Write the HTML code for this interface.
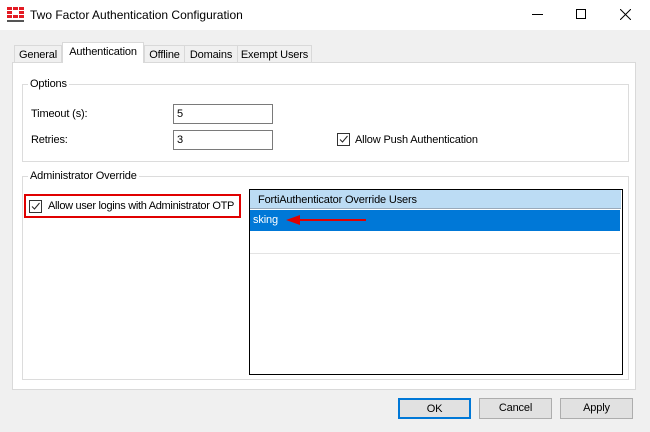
<!DOCTYPE html>
<html><head><style>
*{margin:0;padding:0;box-sizing:border-box}
body{width:650px;height:432px;background:#f0f0f0;font-family:"Liberation Sans",sans-serif;font-size:11px;letter-spacing:-0.15px;color:#000;position:relative;overflow:hidden}
.a{position:absolute;white-space:nowrap}
.title{left:0;top:0;width:650px;height:30px;background:#fff}
.tab{height:19px;border:1px solid #d9d9d9;border-bottom:none;background:#f0f0f0;padding-top:3px;text-align:center;overflow:hidden}
.grp{border:1px solid #dcdcdc}
.lbl{background:#fff;padding:0 2px}
.inp{border:1px solid #7a7a7a;background:#fff;height:20px;padding:3px 3px;width:100px}
.cb{width:13px;height:13px;border:1px solid #333;background:#fff}
.btn{top:398px;width:73px;height:21px;border:1px solid #adadad;background:#e1e1e1;text-align:center;line-height:19px}
</style></head><body>
<div class="a title"></div>
<svg class="a" style="left:7px;top:7px" width="17" height="17" viewBox="0 0 17 17">
<rect x="0" y="0" width="5" height="3" fill="#e31b23"/><rect x="6" y="0" width="5" height="3" fill="#e31b23"/><rect x="12" y="0" width="5" height="3" fill="#e31b23"/>
<rect x="0" y="4" width="5" height="3" fill="#e31b23"/><rect x="12" y="4" width="5" height="3" fill="#e31b23"/>
<rect x="0" y="8" width="5" height="3" fill="#e31b23"/><rect x="6" y="8" width="5" height="3" fill="#e31b23"/><rect x="12" y="8" width="5" height="3" fill="#e31b23"/>
<rect x="0" y="13" width="17" height="2" fill="#555"/></svg>
<div class="a" style="left:30px;top:8px;font-size:12px;letter-spacing:0">Two Factor Authentication Configuration</div>
<div class="a" style="left:532px;top:14px;width:11px;height:1px;background:#000"></div>
<div class="a" style="left:576px;top:9px;width:10px;height:10px;border:1px solid #000"></div>
<svg class="a" style="left:620px;top:9px" width="11" height="11"><path d="M0 0L11 11M11 0L0 11" stroke="#000" stroke-width="1"/></svg>

<div class="a" style="left:12px;top:62px;width:624px;height:328px;background:#fff;border:1px solid #d9d9d9"></div>
<div class="a tab" style="left:14px;top:45px;width:48px;height:17px">General</div>
<div class="a tab" style="left:62px;top:42px;width:82px;height:21px;background:#fff;z-index:2;padding-top:3px">Authentication</div>
<div class="a tab" style="left:144px;top:45px;width:41px;height:17px">Offline</div>
<div class="a tab" style="left:184px;top:45px;width:54px;height:17px">Domains</div>
<div class="a tab" style="left:237px;top:45px;width:75px;height:17px">Exempt Users</div>

<div class="a grp" style="left:22px;top:84px;width:607px;height:78px"></div>
<div class="a lbl" style="left:28px;top:78px">Options</div>
<div class="a" style="left:31px;top:108px">Timeout (s):</div>
<div class="a inp" style="left:173px;top:104px">5</div>
<div class="a" style="left:31px;top:134px">Retries:</div>
<div class="a inp" style="left:173px;top:130px">3</div>
<div class="a cb" style="left:337px;top:133px"><svg width="11" height="11" style="display:block"><path d="M2 5.5L4.5 8L9.5 2" stroke="#222" fill="none"/></svg></div>
<div class="a" style="left:355px;top:134px">Allow Push Authentication</div>

<div class="a grp" style="left:22px;top:176px;width:607px;height:204px"></div>
<div class="a lbl" style="left:28px;top:170px">Administrator Override</div>
<div class="a" style="left:24px;top:194px;width:217px;height:24px;border:2px solid #e00000"></div>
<div class="a cb" style="left:29px;top:200px"><svg width="11" height="11" style="display:block"><path d="M2 5.5L4.5 8L9.5 2" stroke="#222" fill="none"/></svg></div>
<div class="a" style="left:48px;top:200px;letter-spacing:-0.3px">Allow user logins with Administrator OTP</div>

<div class="a" style="left:249px;top:189px;width:374px;height:186px;border:1px solid #000;background:#fff"></div>
<div class="a" style="left:250px;top:190px;width:371px;height:19px;background:#bcdcf4;border-bottom:1px solid #9ab;padding:4px 0 0 8px">FortiAuthenticator Override Users</div>
<div class="a" style="left:250px;top:210px;width:370px;height:21px;background:#0078d7;color:#fff;padding:4px 0 0 3px">sking</div>
<svg class="a" style="left:284px;top:214px" width="85" height="12"><path d="M14 6H82" stroke="#e00000" stroke-width="2"/><path d="M2 6L16 1V11Z" fill="#e00000"/></svg>
<div class="a" style="left:250px;top:253px;width:370px;height:1px;background:#e3e3e3"></div>

<div class="a btn" style="left:398px;border:2px solid #0078d7">OK</div>
<div class="a btn" style="left:479px">Cancel</div>
<div class="a btn" style="left:560px">Apply</div>
</body></html>
